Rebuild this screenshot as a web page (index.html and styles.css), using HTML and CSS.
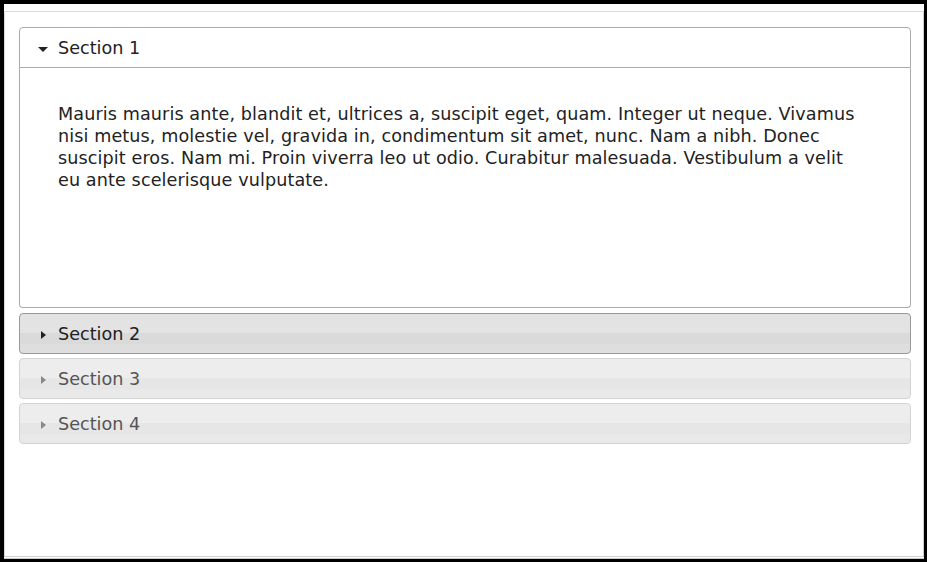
FILE: index.html
```html
<!DOCTYPE html>
<html>
<head>
<meta charset="utf-8">
<link rel="stylesheet" href="styles.css">
</head>
<body>
<div class="screen">
  <div class="window">
    <div class="page">
      <div class="accordion">
        <div class="header active"><span class="icon down"></span>Section 1</div>
        <div class="content">
          <p>Mauris mauris ante, blandit et, ultrices a, suscipit eget, quam. Integer ut neque. Vivamus nisi metus, molestie vel, gravida in, condimentum sit amet, nunc. Nam a nibh. Donec suscipit eros. Nam mi. Proin viverra leo ut odio. Curabitur malesuada. Vestibulum a velit eu ante scelerisque vulputate.</p>
        </div>
        <div class="header hover"><span class="icon right"></span>Section 2</div>
        <div class="header default"><span class="icon right"></span>Section 3</div>
        <div class="header default"><span class="icon right"></span>Section 4</div>
      </div>
    </div>
  </div>
</div>
</body>
</html>
```

FILE: styles.css
```css
html, body {
  margin: 0;
  padding: 0;
  background: #fff;
}

.screen {
  width: 927px;
  height: 562px;
  box-sizing: border-box;
  border-style: solid;
  border-color: #000;
  border-width: 4px 3px 3px 4px;
  background: #fff;
}

.window {
  height: 100%;
  box-sizing: border-box;
  padding-top: 7px;
  padding-bottom: 1px;
  border-bottom: 1px solid #c8c8c8;
}

.page {
  height: 100%;
  box-sizing: border-box;
  border-top: 1px solid #dcdcdc;
  border-left: 1px solid #d8d8d8;
  border-right: 1px solid #cfcfcf;
  border-bottom: 1px solid #d0d0d0;
  padding: 15px 12px 0 14px;
}

.accordion {
  font-family: "DejaVu Sans", Verdana, sans-serif;
  font-size: 17.6px;
}

.header {
  position: relative;
  height: 37px;
  line-height: 37px;
  padding-top: 2px;
  padding-left: 38px;
  border: 1px solid #d3d3d3;
  border-radius: 4px;
  color: #555;
  margin-top: 4px;
  background: linear-gradient(#ededed 0, #ededed 48%, #e6e6e6 48%, #e6e6e6 78%, #e9e9e9 78%, #e9e9e9 100%);
}

.header.active {
  margin-top: 0;
  border-color: #aaa;
  border-radius: 4px 4px 0 0;
  background: #fff;
  color: #222;
}

.header.hover {
  margin-top: 5px;
  border-color: #999;
  color: #212121;
  background: linear-gradient(#e3e3e3 0, #e3e3e3 48%, #dadada 48%, #dadada 78%, #dedede 78%, #dedede 100%);
}

.content {
  height: 204px;
  border: 1px solid #aaa;
  border-top: 0;
  border-radius: 0 0 4px 4px;
  padding: 35px 48px 0 38px;
  color: #222;
}

.content p {
  margin: 0;
  line-height: 22px;
  letter-spacing: 0.1px;
}

.icon {
  position: absolute;
  width: 0;
  height: 0;
}

.icon.down {
  left: 18px;
  top: 19px;
  border-left: 5px solid transparent;
  border-right: 5px solid transparent;
  border-top: 5px solid #222;
}

.icon.right {
  left: 21px;
  top: 17px;
  border-top: 4px solid transparent;
  border-bottom: 4px solid transparent;
  border-left: 5px solid #888;
}

.header.hover .icon.right {
  border-left-color: #222;
}
```
